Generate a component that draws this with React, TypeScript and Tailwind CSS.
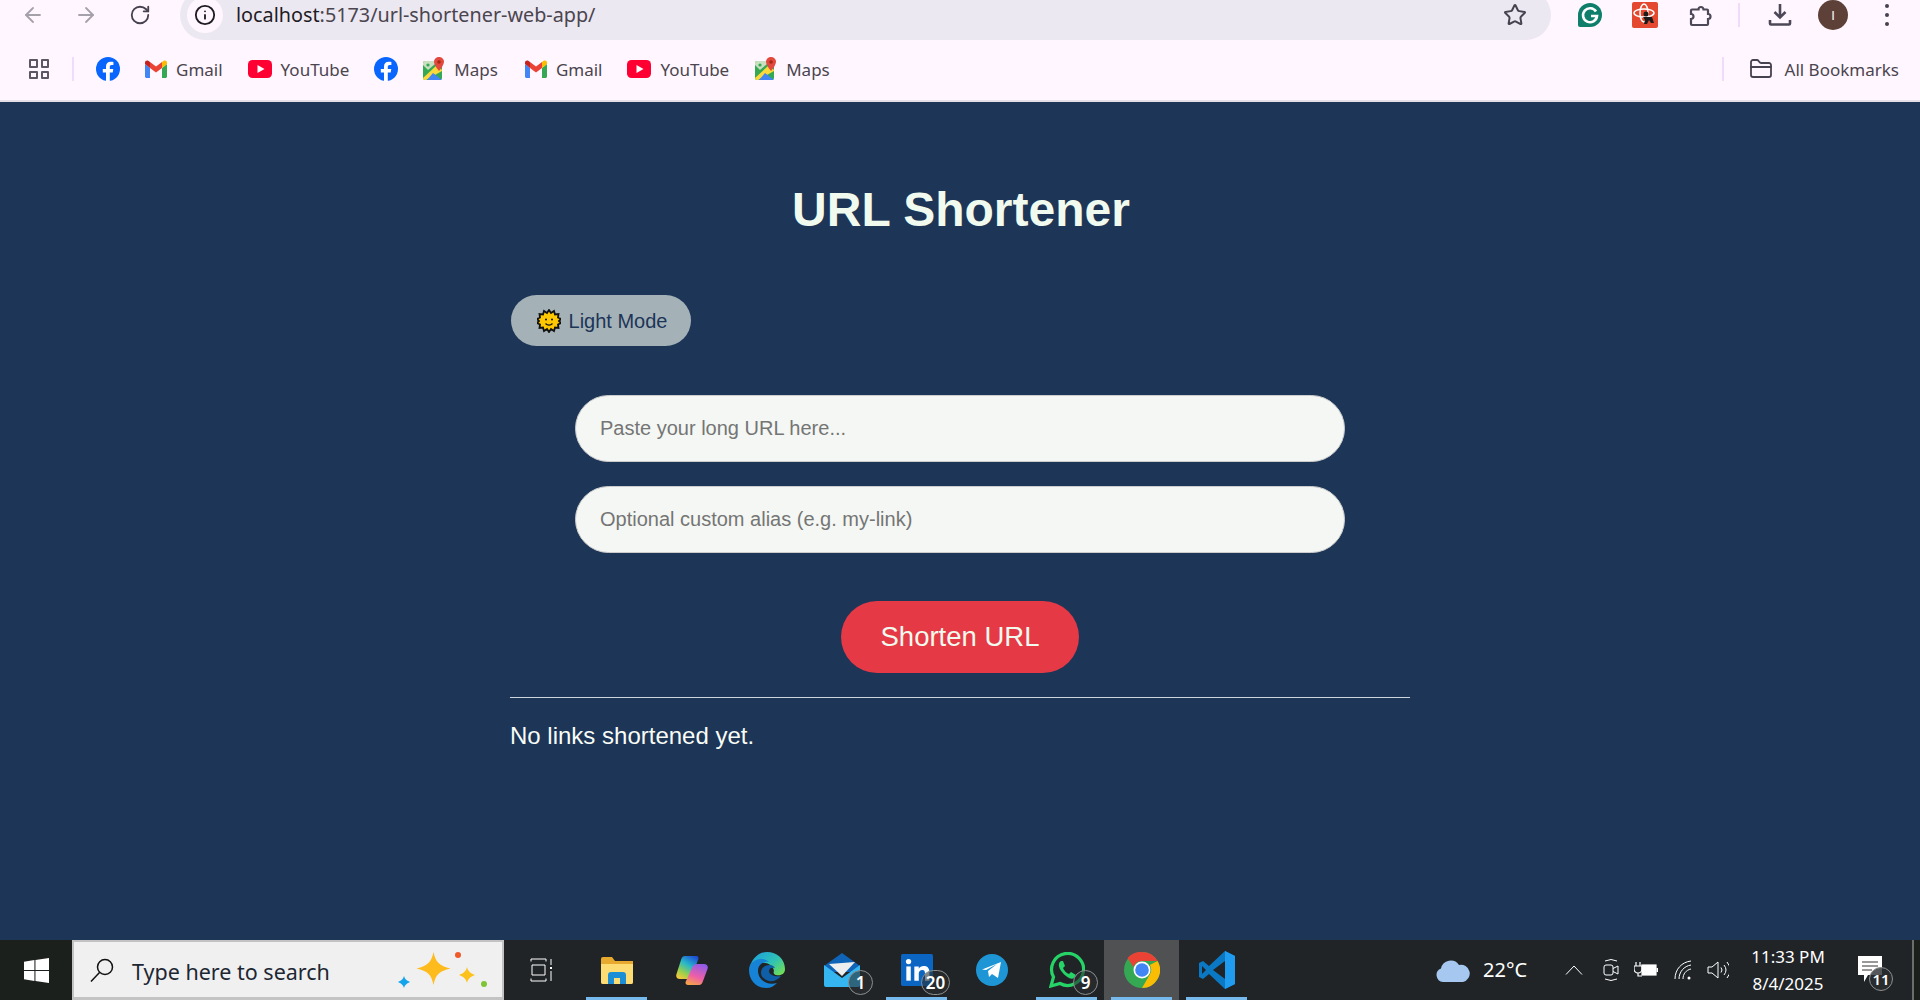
import { ArrowLeft, ArrowRight, RotateCw, Star, Info, FolderClosed } from "lucide-react";

const chromeFont = "font-['Noto_Sans',sans-serif]";

function FacebookIcon() {
  return (
    <svg viewBox="0 0 24 24" className="h-6 w-6 shrink-0">
      <circle cx="12" cy="12" r="12" fill="#0866ff" />
      <path d="M16.7 15.500l.6-3.500h-3.500V9.800c0-1 .5-1.900 2-1.900h1.600v-3s-1.400-.2-2.800-.2c-2.800 0-4.600 1.700-4.600 4.800V12H6.800v3.500H10V24h3.800v-8.500z" fill="#fff" />
    </svg>
  );
}

function GmailIcon() {
  return (
    <svg viewBox="0 0 22 18" className="h-[18px] w-[22px] shrink-0">
      <path d="M0 4v12.500C0 17.300.7 18 1.500 18H5V8z" fill="#4285f4" />
      <path d="M17 8v10h3.500c.8 0 1.500-.7 1.500-1.500V4z" fill="#34a853" />
      <path d="M5 8V2l6 4.500L17 2v6l-6 4.500z" fill="#ea4335" />
      <path d="M0 2.500V4l5 4V2L3.600.9C2-.3 0 .8 0 2.500z" fill="#c5221f" />
      <path d="M22 2.500V4l-5 4V2l1.400-1.100C20-.3 22 .8 22 2.500z" fill="#fbbc04" />
    </svg>
  );
}

function YoutubeIcon() {
  return (
    <svg viewBox="0 0 24 18" className="h-[18px] w-6 shrink-0">
      <rect width="24" height="18" rx="4.500" fill="#ff0033" />
      <path d="M9.500 5l7 4-7 4z" fill="#fff" />
    </svg>
  );
}

function MapsIcon() {
  return (
    <svg viewBox="0 0 22 24" className="h-6 w-[22px] shrink-0">
      <rect y="4" width="19" height="19" rx="2" fill="#34a853" />
      <path d="M2 4h10v3L5 13 0 8V6a2 2 0 0 1 2-2z" fill="#c9dfc0" />
      <circle cx="5" cy="8" r="1.600" fill="#34a853" />
      <path d="M0 21L14 8l5 5v1L3 23H2a2 2 0 0 1-2-2z" fill="#fbd83b" />
      <path d="M4 23l6-7 9 7z" fill="#4285f4" />
      <path d="M16 0c-3 0-5 2.300-5 4.800 0 3.400 5 9.200 5 9.200s5-5.800 5-9.200C21 2.300 19 0 16 0z" fill="#e2483d" />
      <circle cx="16" cy="5" r="1.800" fill="#a52714" />
    </svg>
  );
}

function Bookmark({ icon, label, className = "" }: { icon: React.ReactNode; label: string; className?: string }) {
  return (
    <div className={`flex items-center gap-[9px] ${className}`}>
      {icon}
      <span className="text-[17px] leading-none text-[#4a454e]">{label}</span>
    </div>
  );
}

function TopBars() {
  return (
    <div className={`bg-[#fff6ff] ${chromeFont}`}>
      <div className="flex h-10 items-center overflow-hidden">
        <div className="flex w-[180px] shrink-0 items-center pb-[10px]">
          <ArrowLeft className="ml-[21px] h-6 w-6 text-[#a5a1aa]" strokeWidth={1.800} />
          <ArrowRight className="ml-[29px] h-6 w-6 text-[#a5a1aa]" strokeWidth={1.800} />
          <RotateCw className="ml-[31px] h-[22px] w-[22px] text-[#47424f]" strokeWidth={2} />
        </div>
        <div className="-mt-[10px] flex h-[50px] w-[1371px] shrink-0 items-center rounded-[25px] bg-[#ece8f1]">
          <div className="ml-[7px] flex h-9 w-9 items-center justify-center rounded-full bg-[#fff6ff]">
            <Info className="h-[22px] w-[22px] text-[#1f1b24]" strokeWidth={2} />
          </div>
          <span className="ml-[13px] text-[19.800px] leading-none text-[#1f1b24]">
            localhost<span className="text-[#4a454e]">:5173/url-shortener-web-app/</span>
          </span>
          <Star className="ml-auto mr-[24px] h-6 w-6 text-[#47424f]" strokeWidth={2} />
        </div>
        <div className="flex grow items-center pb-[10px]">
          <svg viewBox="0 0 24 24" className="ml-[27px] h-6 w-6 shrink-0">
            <path d="M12 0a12 12 0 0 1 0 24H2a2 2 0 0 1-2-2V12A12 12 0 0 1 12 0z" fill="#0f7f6b" />
            <path d="M18 8.500A7 7 0 1 0 19 13h-6" fill="none" stroke="#fff" strokeWidth="2.600" />
          </svg>
          <svg viewBox="0 0 26 26" className="ml-[30px] h-[26px] w-[26px] shrink-0">
            <rect width="26" height="26" rx="2" fill="#e4492f" />
            <ellipse cx="12" cy="11" rx="10" ry="4" fill="none" stroke="#fff" strokeWidth="1.500" />
            <ellipse cx="12" cy="11" rx="4" ry="9" fill="none" stroke="#fff" strokeWidth="1.500" />
            <circle cx="14" cy="12" r="2.500" fill="#1b1b1b" />
            <path d="M11 15h9l2 6h-3l-2-3-2 4h-3l1-4z" fill="#1b1b1b" />
          </svg>
          <svg viewBox="0 0 24 24" className="ml-[30px] h-6 w-6 shrink-0" fill="none" stroke="#4d4857" strokeWidth="2.200">
            <path d="M4 6.500h6.500a2.500 2.500 0 0 1 5 0H19a1 1 0 0 1 1 1v3.500a2.500 2.500 0 0 1 0 5v5a1 1 0 0 1-1 1H4a1 1 0 0 1-1-1v-5a2.500 2.500 0 0 0 0-5V7.500a1 1 0 0 1 1-1z" />
          </svg>
          <div className="ml-[26px] h-6 w-0.5 bg-[#f0dcf9]" />
          <svg viewBox="0 0 24 24" className="ml-[28px] h-6 w-6 shrink-0" fill="none" stroke="#4d4857" strokeWidth="2.600">
            <path d="M12 1v13M6.500 9l5.500 5.500L17.500 9M2 17v3.500a1 1 0 0 0 1 1h18a1 1 0 0 0 1-1V17" />
          </svg>
          <div className="ml-[26px] flex h-[30px] w-[30px] shrink-0 items-center justify-center rounded-full bg-[#5d4037] font-['Liberation_Sans',sans-serif] text-[13px] leading-none text-white">
            I
          </div>
          <div className="ml-[37px] flex flex-col gap-[5px]">
            <div className="h-1 w-1 rounded-full bg-[#47424f]" />
            <div className="h-1 w-1 rounded-full bg-[#47424f]" />
            <div className="h-1 w-1 rounded-full bg-[#47424f]" />
          </div>
        </div>
      </div>
      <div className="flex h-[62px] items-center border-b-2 border-[#e4dfe6] pb-0.5">
        <div className="ml-[29px] grid h-5 w-5 grid-cols-2 gap-[3px]">
          <div className="rounded-[1px] border-2 border-[#5c5763]" />
          <div className="rounded-[1px] border-2 border-[#5c5763]" />
          <div className="rounded-[1px] border-2 border-[#5c5763]" />
          <div className="rounded-[1px] border-2 border-[#5c5763]" />
        </div>
        <div className="ml-[23px] h-6 w-0.5 bg-[#f0dcf9]" />
        <div className="ml-[22px] flex items-center gap-[25px]">
          <FacebookIcon />
          <Bookmark icon={<GmailIcon />} label="Gmail" />
          <Bookmark icon={<YoutubeIcon />} label="YouTube" />
          <FacebookIcon />
          <Bookmark icon={<MapsIcon />} label="Maps" />
          <Bookmark icon={<GmailIcon />} label="Gmail" className="ml-[2px]" />
          <Bookmark icon={<YoutubeIcon />} label="YouTube" />
          <Bookmark icon={<MapsIcon />} label="Maps" className="ml-[1px]" />
        </div>
        <div className="ml-auto h-6 w-0.5 bg-[#f0dcf9]" />
        <div className="ml-[25px] mr-[21px] flex items-center gap-[12px]">
          <FolderClosed className="h-6 w-6 text-[#47424f]" strokeWidth={1.800} />
          <span className="text-[17px] leading-none text-[#4a454e]">All Bookmarks</span>
        </div>
      </div>
    </div>
  );
}

function SunIcon() {
  return (
    <svg viewBox="0 0 24 24" className="h-6 w-6 shrink-0">
      <path
        d="M12 1l2 3 3-2 1 3.500 3.500-.5-.5 3.500L24 10l-2 2 2 2-3 1.500.5 3.500-3.500-.5-1 3.500-3-2-2 3-2-3-3 2-1-3.500-3.500.5.500-3.500L0 14l2-2-2-2 3-1.500L2.500 5 6 5.500 7 2l3 2z"
        fill="#ffc800"
        stroke="#111"
        strokeWidth="1.800"
      />
      <circle cx="9" cy="10.500" r="1" fill="#111" />
      <circle cx="15" cy="10.500" r="1" fill="#111" />
      <path d="M8.500 14.500c2 2 5 2 7 0" fill="none" stroke="#111" strokeWidth="1.300" />
    </svg>
  );
}

function Main() {
  return (
    <main className="grow bg-[#1d3557] font-['Liberation_Sans',Arial,sans-serif]">
      <div className="mx-auto w-[900px] pt-[75px]">
        <h1 className="pl-[2px] text-center text-[48px] font-bold leading-[66px] text-[#f1faee]">URL Shortener</h1>
        <button className="ml-px mt-[52px] flex h-[51px] w-[180px] items-center justify-center gap-2 rounded-[26px] bg-[#a4b2b8] pl-[2px] text-[20px] text-[#1d3557]">
          <SunIcon />
          Light Mode
        </button>
        <div className="mt-[49px] flex flex-col items-center gap-6">
          <input
            placeholder="Paste your long URL here..."
            className="h-[67px] w-[770px] rounded-[34px] border border-[#ccc] bg-[#f4f7f3] px-6 text-[20px] text-black outline-none placeholder:text-[#757575]"
          />
          <input
            placeholder="Optional custom alias (e.g. my-link)"
            className="h-[67px] w-[770px] rounded-[34px] border border-[#ccc] bg-[#f4f7f3] px-6 text-[20px] text-black outline-none placeholder:text-[#757575]"
          />
        </div>
        <div className="mt-12 flex justify-center">
          <button className="h-[72px] w-[238px] rounded-[36px] bg-[#e63946] text-[27.500px] text-[#f1faee]">Shorten URL</button>
        </div>
        <hr className="mt-6 border-t border-[#cdd6dd]" />
        <p className="mt-[24px] text-[24px] leading-7 text-[#f8fcf6]">No links shortened yet.</p>
      </div>
    </main>
  );
}

function Badge({ value }: { value: string }) {
  return (
    <div className="absolute left-[44px] top-[30px] flex h-[25px] w-[25px] items-center justify-center rounded-full border border-[#8d8f90] bg-[#2a2e31]/60 text-[17px] font-semibold leading-none text-white">
      {value}
    </div>
  );
}

function TaskCell({ children, active, open }: { children: React.ReactNode; active?: boolean; open?: boolean }) {
  return (
    <div className={`relative flex h-full w-[75px] shrink-0 items-center justify-center ${active ? "bg-[#4f5152]" : ""}`}>
      {children}
      {open && <div className="absolute bottom-0 left-[7px] h-[3px] w-[61px] bg-[#76b9ed]" />}
    </div>
  );
}

function Taskbar() {
  return (
    <div className={`flex h-[60px] shrink-0 items-stretch bg-[#212427] text-white ${chromeFont}`}>
      <div className="flex w-[72px] items-center justify-center bg-[#1c201c]">
        <svg viewBox="0 0 24 24" className="h-[25px] w-[25px]">
          <path d="M0 3.500L10 2v9.500H0zM11 1.900L24 0v11.500H11zM0 12.500h10V22L0 20.500zM11 12.500h13V24l-13-1.900z" fill="#fff" />
        </svg>
      </div>
      <div className="flex w-[432px] items-center border-[2px] border-b-[3px] border-[#c3c3c3] bg-[#f0f0f0] text-[#1d2733]">
        <svg viewBox="0 0 24 24" className="ml-[16px] h-6 w-6 shrink-0" fill="none" stroke="#111" strokeWidth="1.500">
          <circle cx="15" cy="9" r="7.500" />
          <path d="M9.500 14.500L1 23.500" />
        </svg>
        <span className="ml-[18px] mt-[4px] text-[21.500px] leading-none">Type here to search</span>
        <svg viewBox="0 0 92 44" className="ml-auto mr-[15px] h-[44px] w-[92px]">
          <path d="M38.500 4c2 10 6 14 17 16.500-11 2.500-15 6-17 16.500-2-10.500-6-14-17-16.500 11-2.500 15-6.500 17-16.500z" fill="#fdbb1e" />
          <path d="M72 19c1 4 3 6 8 8-5 2-7 4-8 8-1-4-3-6-8-8 5-2 7-4 8-8z" fill="#fcc21b" />
          <path d="M9 28c1 3 2 4 6 6-4 2-5 3-6 6-1-3-2-4-6-6 4-2 5-3 6-6z" fill="#14a4ec" />
          <circle cx="63" cy="7" r="3" fill="#ef5a2b" />
          <circle cx="89" cy="36" r="3" fill="#7fc435" />
        </svg>
      </div>
      <TaskCell>
        <svg viewBox="0 0 24 24" className="h-6 w-6" fill="none" stroke="#fff" strokeWidth="1">
          <path d="M1 3.500V1h15v2.500M1 20.500V23h15v-2.500M2 7h13v10H2zM21 1v6M21 13v10" />
          <rect x="20" y="9" width="2" height="2" fill="#fff" stroke="none" />
        </svg>
      </TaskCell>
      <TaskCell open>
        <svg viewBox="0 0 32 28" className="h-7 w-8">
          <path d="M0 3a2 2 0 0 1 2-2h9l3 4h18v21a2 2 0 0 1-2 2H2a2 2 0 0 1-2-2z" fill="#e8a92f" />
          <path d="M0 8h32v18a2 2 0 0 1-2 2H2a2 2 0 0 1-2-2z" fill="#fddc73" />
          <path d="M7 28v-9a3 3 0 0 1 3-3h12a3 3 0 0 1 3 3v9h-6v-6h-6v6z" fill="#1b8ed6" />
        </svg>
      </TaskCell>
      <TaskCell>
        <svg viewBox="0 0 32 31" className="h-[31px] w-8">
          <defs>
            <linearGradient id="copilotA" x1="0.800" y1="0" x2="0.200" y2="1">
              <stop offset="0" stopColor="#1e4fd8" />
              <stop offset="0.400" stopColor="#27b7c9" />
              <stop offset="0.750" stopColor="#9bd04a" />
              <stop offset="1" stopColor="#f6c83c" />
            </linearGradient>
            <linearGradient id="copilotB" x1="0.700" y1="0" x2="0.300" y2="1">
              <stop offset="0" stopColor="#8f5be8" />
              <stop offset="0.600" stopColor="#ee5fa8" />
              <stop offset="1" stopColor="#f5a14b" />
            </linearGradient>
          </defs>
          <path d="M9 1h11c2.500 0 3 2 2 4l-6 16c-1 2.500-2.500 3-5 3H4c-3 0-4.500-2-3.500-5L5 5c.7-2.500 2-4 4-4z" fill="url(#copilotA)" />
          <path d="M21 9h7c3 0 4.500 2 3.500 5L27 26c-.7 2.500-2 4-4 4H12c-2.500 0-3-2-2-4l6-13c1-2.500 2.500-4 5-4z" fill="url(#copilotB)" />
        </svg>
      </TaskCell>
      <TaskCell>
        <svg viewBox="0 0 36 36" className="h-9 w-9">
          <defs>
            <linearGradient id="edgeTop" x1="0" y1="0" x2="1" y2="0.800">
              <stop offset="0" stopColor="#1b9de2" />
              <stop offset="0.600" stopColor="#2fc2b5" />
              <stop offset="1" stopColor="#6fdc5a" />
            </linearGradient>
          </defs>
          <path d="M1 14C4 5 11 0 18 0c10 0 18 7 18 17 0 5-4 7-9 6-2-.5-3-2-2-4-1-6-7-9-13-8-5 .7-8 2-11 3z" fill="url(#edgeTop)" />
          <path d="M0 18C0 11 6 7 12 7c3 0 6 1 8 3-6-1-11 3-11 9 0 8 8 15 19 12-3 3-6 5-11 5C7 36 0 28 0 18z" fill="#1783d6" />
          <path d="M12 21c0-5 4-8 9-8 2 0 4 1 5 3-3-1-6 0-6 3 0 4 6 6 12 5-3 4-8 6-12 5-4-1-8-4-8-8z" fill="#0f5ea8" />
        </svg>
      </TaskCell>
      <TaskCell>
        <svg viewBox="0 0 36 34" className="h-[34px] w-9">
          <path d="M0 13L18 0l18 13v6H0z" fill="#0f64b8" />
          <path d="M5 11l26-2-13 14z" fill="#eeeeee" />
          <path d="M0 12l18 13 18-13v20a2 2 0 0 1-2 2H2a2 2 0 0 1-2-2z" fill="#36b6f0" />
        </svg>
        <Badge value="1" />
      </TaskCell>
      <TaskCell open>
        <svg viewBox="0 0 36 36" className="h-8 w-8">
          <rect width="36" height="36" rx="2" fill="#0a66c2" />
          <rect x="6" y="14" width="5" height="16" fill="#fff" />
          <circle cx="8.500" cy="8.500" r="3" fill="#fff" />
          <path d="M15 14h5v2.500c1-1.700 3-3 5.500-3 5 0 6.500 3 6.500 8v8.500h-5v-8c0-2-.5-4-3-4s-4 2-4 4v8h-5z" fill="#fff" />
        </svg>
        <div className="absolute left-[42px] top-[30px] flex h-[25px] w-[29px] items-center justify-center rounded-full border border-[#8d8f90] bg-[#2a2e31]/60 text-[17px] font-semibold leading-none text-white">
          20
        </div>
      </TaskCell>
      <TaskCell>
        <svg viewBox="0 0 32 32" className="h-8 w-8">
          <circle cx="16" cy="16" r="16" fill="#1e96d6" />
          <path d="M6 15.500L25 8l-3 16-6-4-3 3-1-6 9-7-11 6z" fill="#fff" />
        </svg>
      </TaskCell>
      <TaskCell open>
        <svg viewBox="0 0 36 36" className="h-9 w-9">
          <path d="M2 34l2.500-9A16 16 0 1 1 11 31.500z" fill="none" stroke="#25d366" strokeWidth="3.200" />
          <path d="M12 9c-3 2-3 6 1 11s9 8 12 6l2-3-5-3-2 2c-3-1-5-4-6-6l2-2-2-5z" fill="#25d366" />
        </svg>
        <Badge value="9" />
      </TaskCell>
      <TaskCell active open>
        <svg viewBox="0 0 36 36" className="h-9 w-9">
          <circle cx="18" cy="18" r="18" fill="#34a853" />
          <path d="M18 0a18 18 0 0 1 15.600 9H18a9 9 0 0 0-8.500 6L3.500 6A18 18 0 0 1 18 0z" fill="#ea4335" />
          <path d="M33.600 9A18 18 0 0 1 18 36l7.800-13.500A9 9 0 0 0 25.800 13z" fill="#fbbc04" />
          <circle cx="18" cy="18" r="8.500" fill="#fff" />
          <circle cx="18" cy="18" r="6.800" fill="#4285f4" />
        </svg>
      </TaskCell>
      <TaskCell open>
        <svg viewBox="0 0 36 40" className="h-10 w-9">
          <path d="M26 1l10 5v28l-10 5-16-15-6 5-4-2V13l4-2 6 5z" fill="#0a78c2" />
          <path d="M26 1l10 5v28l-10 5z" fill="#1f9cf0" />
          <path d="M26 11L14 20l12 9z" fill="#212427" />
          <path d="M3 16l4 4-4 4z" fill="#212427" />
        </svg>
      </TaskCell>
      <div className="flex grow items-center">
        <svg viewBox="0 0 36 24" className="ml-[181px] h-6 w-9 shrink-0">
          <path d="M8 24a7 7 0 0 1-2-13.500A10 10 0 0 1 24 7a8.500 8.500 0 0 1 4 17z" fill="#a6c8f0" />
        </svg>
        <span className="ml-[12px] w-[44px] shrink-0 text-[20px] leading-none">22°C</span>
        <svg viewBox="0 0 18 10" className="ml-[38px] h-[10px] w-[18px] shrink-0" fill="none" stroke="#fff" strokeWidth="1">
          <path d="M1 9.500L9 1l8 8.500" />
        </svg>
        <svg viewBox="0 0 16 24" className="ml-[20px] h-6 w-4 shrink-0" fill="none" stroke="#fff" strokeWidth="1">
          <rect x="1" y="7" width="9" height="10" rx="2" />
          <path d="M10 10.500l5-2.500v8l-5-2.500M2 3q6-3 12 0M2 21q6 3 12 0" />
        </svg>
        <svg viewBox="0 0 24 16" className="ml-[15px] h-4 w-6 shrink-0" fill="none" stroke="#fff" strokeWidth="1.200">
          <path d="M2 0v4M6 0v4M0 4h8v3a4 4 0 0 1-8 0zM4 11v3h4" />
          <rect x="8" y="3" width="14" height="10" fill="#fff" />
          <rect x="22.500" y="6" width="1.500" height="4" fill="#fff" stroke="none" />
        </svg>
        <svg viewBox="0 0 18 20" className="ml-[16px] h-5 w-[18px] shrink-0" fill="none" stroke="#fff" strokeWidth="1">
          <path d="M1 19C1 9 8 2 17 1M5 19C5 12 10 6 17 5M9 19c0-5 3-9 8-10" />
          <circle cx="15" cy="18" r="1.500" fill="#fff" stroke="none" />
        </svg>
        <svg viewBox="0 0 22 20" className="ml-[15px] h-5 w-[22px] shrink-0" fill="none" stroke="#fff" strokeWidth="1">
          <path d="M1 7h4l6-5v16l-6-5H1zM14 7.500a4 4 0 0 1 0 5M17 5a8 8 0 0 1 0 10M20 2a12 12 0 0 1 0 16" />
        </svg>
        <div className="ml-[23px] flex w-[72px] shrink-0 flex-col items-center gap-[9px] whitespace-nowrap text-[17px] leading-[18px]">
          <span>11:33 PM</span>
          <span>8/4/2025</span>
        </div>
        <div className="relative ml-[34px] h-7 w-6 shrink-0">
          <svg viewBox="0 0 24 28" className="h-7 w-6">
            <path d="M0 0h24v19H10l-4 7v-7H0z" fill="#fff" />
            <path d="M4 6h16M4 10h16M4 14h10" stroke="#333" strokeWidth="1" />
          </svg>
          <div className="absolute left-[11px] top-[11px] flex h-6 w-6 items-center justify-center rounded-full border border-[#8d8f90] bg-[#2a2e31]/80 text-[15px] font-semibold leading-none text-white">
            11
          </div>
        </div>
        <div className="ml-auto h-full w-[2px] bg-[#6b6e6b]" />
        <div className="h-full w-[6px] bg-[#1c201c]" />
      </div>
    </div>
  );
}

export default function App() {
  return (
    <div className="flex h-[1000px] flex-col overflow-hidden">
      <TopBars />
      <Main />
      <Taskbar />
    </div>
  );
}
